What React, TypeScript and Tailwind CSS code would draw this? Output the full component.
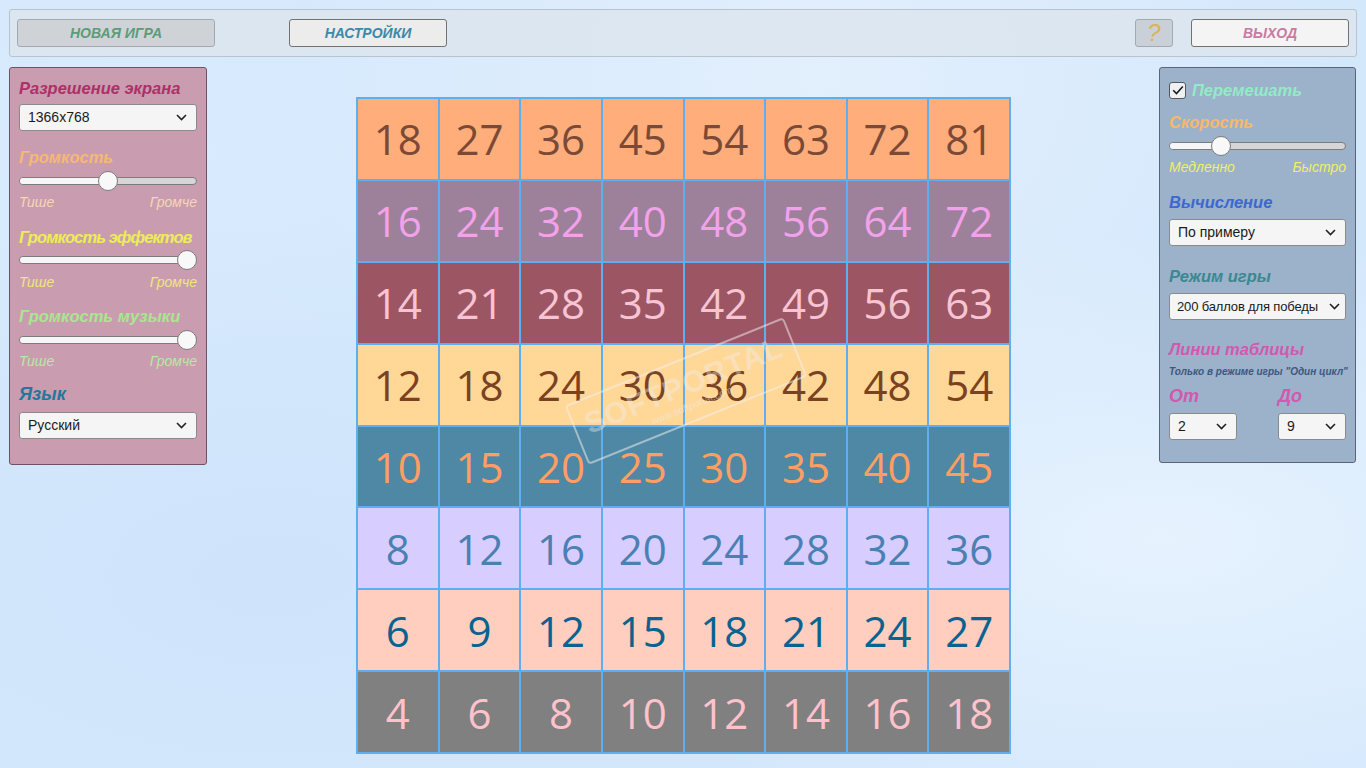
import React from "react";

const ui = { fontFamily: '"Liberation Sans", Arial, sans-serif' };
const num = { fontFamily: '"Open Sans", "Noto Sans", sans-serif' };

type Row = { bg: string; fg: string; values: number[] };

const rows: Row[] = [
  { bg: "bg-[#ffae7b]", fg: "text-[#7b4a36]", values: [18, 27, 36, 45, 54, 63, 72, 81] },
  { bg: "bg-[#9d8099]", fg: "text-[#f2a2ea]", values: [16, 24, 32, 40, 48, 56, 64, 72] },
  { bg: "bg-[#9c5663]", fg: "text-[#f8c4d4]", values: [14, 21, 28, 35, 42, 49, 56, 63] },
  { bg: "bg-[#ffd797]", fg: "text-[#7a4222]", values: [12, 18, 24, 30, 36, 42, 48, 54] },
  { bg: "bg-[#4f88a4]", fg: "text-[#ff9e62]", values: [10, 15, 20, 25, 30, 35, 40, 45] },
  { bg: "bg-[#d8cdff]", fg: "text-[#4a80b2]", values: [8, 12, 16, 20, 24, 28, 32, 36] },
  { bg: "bg-[#ffcebe]", fg: "text-[#0a6290]", values: [6, 9, 12, 15, 18, 21, 24, 27] },
  { bg: "bg-[#808080]", fg: "text-[#ffc2cc]", values: [4, 6, 8, 10, 12, 14, 16, 18] },
];

function Chevron() {
  return (
    <svg width="11" height="7" viewBox="0 0 11 7" className="shrink-0">
      <path d="M1 1l4.5 4.5L10 1" fill="none" stroke="#222" strokeWidth="1.6" />
    </svg>
  );
}

function Select({
  value,
  className = "",
  compact = false,
}: {
  value: string;
  className?: string;
  compact?: boolean;
}) {
  const sizing = compact
    ? "gap-[3px] pl-[7px] pr-[5px] text-[13px] tracking-[-0.15px]"
    : "gap-[3px] pl-[8px] pr-[9px] text-[14px]";
  return (
    <div
      className={`flex h-[27px] items-center justify-between rounded-[3px] border border-[#8a8a8a] bg-[#f5f5f5] text-[#1a1a1a] ${sizing} ${className}`}
    >
      <span className="whitespace-nowrap">{value}</span>
      <Chevron />
    </div>
  );
}

function Slider({ pos, className = "" }: { pos: number; className?: string }) {
  // pos: 0..1 along the track
  return (
    <div className={`relative h-[20px] ${className}`}>
      <div className="absolute left-0 right-0 top-[6px] flex h-[8px] overflow-hidden rounded-full border border-[#7c7c7c] bg-[#d6d6d6]">
        <div className="h-full bg-[#f6f6f6]" style={{ width: `${pos * 100}%` }} />
      </div>
      <div
        className="absolute top-0 h-[20px] w-[20px] rounded-full border border-[#7c7c7c] bg-[#f8f8f8]"
        style={{ left: `calc(${pos * 100}% - ${pos * 20}px)` }}
      />
    </div>
  );
}

function Heading({
  children,
  color,
  className = "",
  big = false,
}: {
  children: React.ReactNode;
  color: string;
  className?: string;
  big?: boolean;
}) {
  const size = big ? "text-[18px]" : "text-[16.5px]";
  return (
    <div className={`h-[20px] font-bold italic leading-[20px] whitespace-nowrap ${size} ${color} ${className}`}>
      {children}
    </div>
  );
}

function Ends({ left, right, color, className = "" }: { left: string; right: string; color: string; className?: string }) {
  return (
    <div className={`flex h-[16px] justify-between text-[14px] italic leading-[16px] ${color} ${className}`}>
      <span>{left}</span>
      <span>{right}</span>
    </div>
  );
}

function TopButton({ label, className }: { label: string; className: string }) {
  return (
    <div
      className={`flex h-[28px] items-center justify-center rounded-[3px] border text-[14px] font-bold italic ${className}`}
    >
      {label}
    </div>
  );
}

function LeftPanel() {
  return (
    <div className="h-[398px] w-[198px] shrink-0 rounded-[3px] border border-[#6d5263] bg-[#c99daf] px-[9px] pt-[10px]">
      <Heading color="text-[#ad3068]">Разрешение экрана</Heading>
      <Select value="1366x768" className="mt-[6px]" />
      <Heading color="text-[#f6b874]" className="mt-[16px]">Громкость</Heading>
      <Slider pos={0.5} className="mt-[4px]" />
      <Ends left="Тише" right="Громче" color="text-[#f6d6b8]" className="mt-[3px]" />
      <Heading color="text-[#eded58]" className="mt-[17px] tracking-[-0.9px]">Громкость эффектов</Heading>
      <Slider pos={1} className="mt-[3px]" />
      <Ends left="Тише" right="Громче" color="text-[#efe77a]" className="mt-[4px]" />
      <Heading color="text-[#a8e690]" className="mt-[16px]">Громкость музыки</Heading>
      <Slider pos={1} className="mt-[4px]" />
      <Ends left="Тише" right="Громче" color="text-[#b6e9a2]" className="mt-[3px]" />
      <Heading color="text-[#23779e]" className="mt-[15px]" big>Язык</Heading>
      <Select value="Русский" className="mt-[8px]" />
    </div>
  );
}

function RightPanel() {
  return (
    <div className="h-[396px] w-[197px] shrink-0 rounded-[3px] border border-[#5b6476] bg-[#9cb1ca] px-[9px] pt-[12px]">
      <div className="flex h-[20px] items-center gap-[6px]">
        <div className="flex h-[17px] w-[17px] items-center justify-center rounded-[3px] border border-[#55595e] bg-[#eef0f2]">
          <svg width="12" height="10" viewBox="0 0 12 10">
            <path d="M1.2 5.2l3.3 3.3L10.8 1.5" fill="none" stroke="#1c1c1c" strokeWidth="1.6" />
          </svg>
        </div>
        <span className="text-[16.5px] font-bold italic text-[#92ebc6]">Перемешать</span>
      </div>
      <Heading color="text-[#f8b868]" className="mt-[12px]">Скорость</Heading>
      <Slider pos={0.27} className="mt-[4px]" />
      <Ends left="Медленно" right="Быстро" color="text-[#eef064]" className="mt-[3px]" />
      <Heading color="text-[#3c68d0]" className="mt-[17px]">Вычисление</Heading>
      <Select value="По примеру" className="mt-[7px]" />
      <Heading color="text-[#3a8890]" className="mt-[20px]">Режим игры</Heading>
      <Select value="200 баллов для победы" className="mt-[7px]" compact />
      <Heading color="text-[#d258b0]" className="mt-[19px]">Линии таблицы</Heading>
      <div className="mt-[7px] h-[12px] whitespace-nowrap text-[10px] font-bold italic leading-[12px] text-[#3c5880]">
        Только в режиме игры "Один цикл"
      </div>
      <div className="mt-[8px] flex justify-between">
        <div className="w-[68px]">
          <Heading color="text-[#d258b0]" big>От</Heading>
          <Select value="2" className="mt-[7px]" />
        </div>
        <div className="w-[68px]">
          <Heading color="text-[#d258b0]" big>До</Heading>
          <Select value="9" className="mt-[7px]" />
        </div>
      </div>
    </div>
  );
}

function Board() {
  return (
    <div className="relative mt-[30px] shrink-0">
      <div className="grid w-[655px] grid-cols-8 gap-[2px] bg-[#5eaef2] p-[2px]">
        {rows.map((r, ri) =>
          r.values.map((v, ci) => (
            <div
              key={`${ri}-${ci}`}
              className={`flex h-[79.9px] items-center justify-center pt-[1px] text-[42px] font-medium leading-none ${r.bg} ${r.fg}`}
              style={num}
            >
              {v}
            </div>
          ))
        )}
      </div>
      {/* faint site stamp over the board */}
      <div className="pointer-events-none absolute left-[212px] top-[262px] h-[64px] w-[236px] -rotate-[22deg] rounded-[4px] border-[2px] border-[#f4f4f4]/50">
        <div className="flex h-full flex-col items-center justify-center">
          <div className="text-[30px] font-bold leading-none tracking-[1px] text-[#f0f0f0]/40" style={ui}>
            SOFTPORTAL
          </div>
          <div className="mt-[2px] text-[10px] leading-none text-[#f0f0f0]/50" style={ui}>
            www.softportal.com
          </div>
        </div>
      </div>
    </div>
  );
}

export default function App() {
  return (
    <div
      className="relative h-[768px] w-[1366px] overflow-hidden bg-[#d4e8fc]"
      style={ui}
    >
      <div className="pointer-events-none absolute inset-0 bg-[radial-gradient(ellipse_at_20%_75%,#cfe4fb_0%,transparent_45%),radial-gradient(ellipse_at_85%_70%,#e6f2fe_0%,transparent_40%),radial-gradient(ellipse_at_60%_10%,#e2effd_0%,transparent_45%),radial-gradient(ellipse_at_10%_20%,#d9ebfd_0%,transparent_40%)]" />
      <div className="relative flex h-full flex-col px-[9px] pt-[9px]">
        {/* top toolbar */}
        <div className="flex h-[48px] items-center rounded-[3px] border border-[#b9c3ce] bg-[#dce5ef]/90 pl-[7px] pr-[7px]">
          <TopButton label="НОВАЯ ИГРА" className="w-[198px] border-[#a4a9ae] bg-[#cfd3d8] text-[#5c9c79]" />
          <TopButton label="НАСТРОЙКИ" className="ml-[74px] w-[158px] border-[#727272] bg-[#ececec] text-[#3a89a9]" />
          <div className="flex-1" />
          <div className="flex h-[28px] w-[38px] items-center justify-center rounded-[3px] border border-[#a2a9b1] bg-[#c9d0d8] text-[24px] font-normal italic text-[#e0b254]">
            ?
          </div>
          <TopButton label="ВЫХОД" className="ml-[18px] w-[158px] border-[#727272] bg-[#f4f4f4] text-[#c97aa2]" />
        </div>
        {/* main area */}
        <div className="mt-[10px] flex">
          <LeftPanel />
          <div className="w-[149px] shrink-0" />
          <Board />
          <div className="w-[148px] shrink-0" />
          <RightPanel />
        </div>
      </div>
    </div>
  );
}
